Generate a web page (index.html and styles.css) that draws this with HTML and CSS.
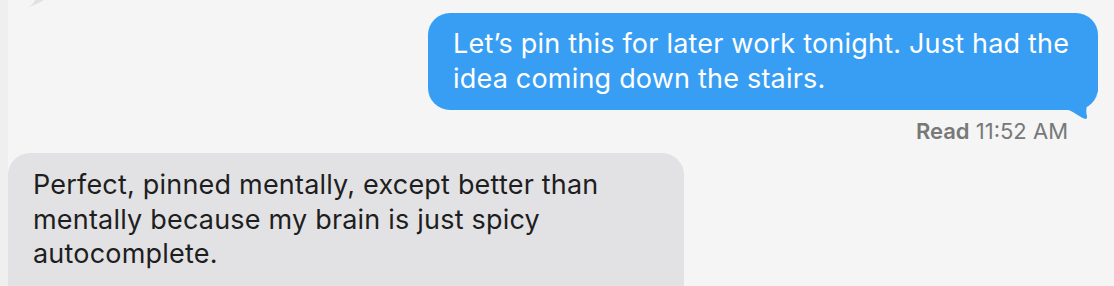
FILE: index.html
```html
<!DOCTYPE html>
<html lang="en">

<head>
  <meta charset="UTF-8" />
  <meta name="viewport" content="width=device-width, initial-scale=1.0" />
  <title>Messages</title>
  <link rel="stylesheet" href="styles.css">
</head>

<body>
  <div class="thread">
    <!-- tail of the message above, scrolled off -->
    <svg class="prev-tail" width="40" height="10" viewBox="0 0 40 10">
      <path d="M20,7 C26,5.5 31,3 36,0 L27,0 C26,3 23.5,5.5 20,7 Z" fill="#e2e2e4" />
    </svg>

    <div class="msg sent">
      <p>Let’s pin this for later work tonight. Just had the idea coming down the stairs.</p>
      <svg class="tail" width="40" height="40" viewBox="0 0 40 40">
        <path d="M0,0 H40 V9 C40,16 33,18 30,23 C28,27 28,33 29,36 C29.5,38.5 28,39.5 26,38.5 C20,36 15,31 10,30 H0 Z" fill="#379ef4" />
      </svg>
    </div>
    <div class="receipt"><b>Read</b> 11:52 AM</div>

    <div class="msg received">
      <p>Perfect, pinned mentally, except better than mentally because my brain is just spicy autocomplete.</p>
    </div>
  </div>
</body>

</html>
```

FILE: styles.css
```css
* {
  box-sizing: border-box;
}

body {
  margin: 0;
  background: #f4f5f4;
  font-family: Inter, "Noto Sans", sans-serif;
  overflow: hidden;
}

/* the conversation view, scrolled so the last bubble runs off the bottom */
.thread {
  position: relative;
  height: 286px;
  overflow: hidden;
  border-left: 8px solid #eeefee;
  padding: 13px 16px 0 0;
  display: flex;
  flex-direction: column;
}

.prev-tail {
  position: absolute;
  left: 0;
  top: 0;
}

.msg {
  position: relative;
  flex-shrink: 0;
  border-radius: 22px;
  padding: 14px 20px 14px 25px;
}

.msg p {
  margin: 0;
  font-size: 27px;
  line-height: 34.5px;
  letter-spacing: 0.2px;
}

.sent {
  align-self: flex-end;
  width: 670px;
  background: #379ef4;
  color: #fff;
}

.sent .tail {
  position: absolute;
  right: 0;
  bottom: -10px;
}

.receipt {
  align-self: flex-end;
  margin: 8px 30px 0 0;
  font-size: 22px;
  line-height: 26px;
  color: #787878;
}

.receipt b {
  font-weight: 600;
}

.received {
  align-self: flex-start;
  width: 676px;
  margin-top: 9px;
  padding-top: 15px;
  padding-bottom: 40px;
  background: #e2e2e4;
  color: #1e1e1e;
}
```
